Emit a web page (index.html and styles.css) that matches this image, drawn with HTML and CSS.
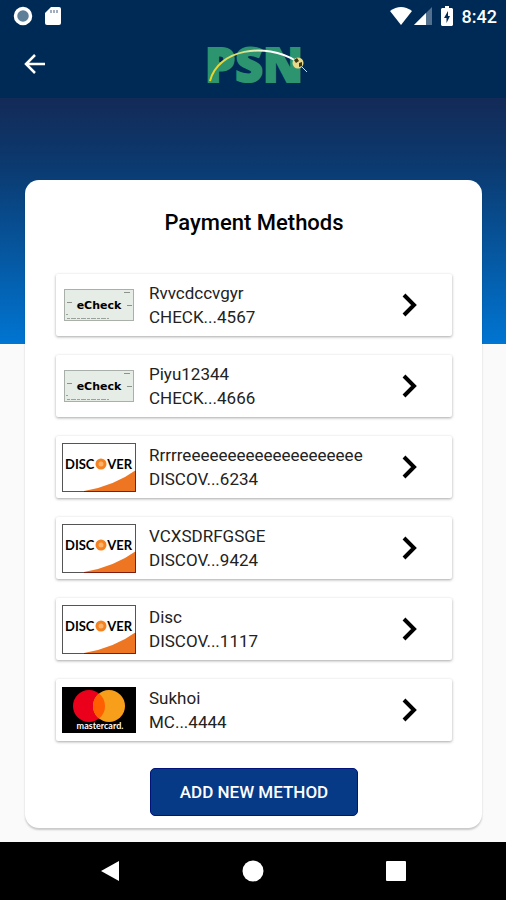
FILE: index.html
```html
<!DOCTYPE html>
<html lang="en">
<head>
    <meta charset="UTF-8">
    <meta name="viewport" content="width=device-width, initial-scale=1.0">
    <title>PSN - Payment Methods</title>
    <link rel="stylesheet" href="styles.css">
</head>
<body>
    <!-- Shared drawings -->
    <svg class="sprites" aria-hidden="true">
        <symbol id="echeck" viewBox="0 0 74 34">
            <rect x="2.500" y="1.500" width="69" height="31" fill="#e6ede6" stroke="#a9b0a9"/>
            <path d="M62 4.500h6M5 14.500h5M65 17.500h5" stroke="#8b928b"/>
            <path d="M5 30.500h42" stroke="#9ba29b" stroke-dasharray="3 1 5 1"/>
            <path d="M4 26.500h2" stroke="#9ba29b"/>
            <text x="37" y="21" text-anchor="middle" class="echeck-text">eCheck</text>
        </symbol>
        <symbol id="discover" viewBox="0 0 74 49">
            <rect width="74" height="49" fill="#fff"/>
            <path d="M22 48Q52 43 74 27V49H22z" fill="#ee7623"/>
            <rect x="0.500" y="0.500" width="73" height="48" fill="none" stroke="#555"/>
            <path d="M22 48.500H73.500V28" fill="none" stroke="#7d1c10"/>
            <text x="3" y="26" class="discover-text">DISC</text>
            <circle cx="39" cy="21" r="5.500" fill="#f58220"/>
            <circle cx="39" cy="21" r="2.500" fill="#fbb269"/>
            <text x="70" y="26" text-anchor="end" class="discover-text">VER</text>
        </symbol>
        <symbol id="mastercard" viewBox="0 0 74 46">
            <rect width="74" height="46" fill="#000"/>
            <circle cx="27" cy="19" r="16" fill="#eb001b"/>
            <circle cx="47" cy="19" r="16" fill="#f79e1b"/>
            <path d="M37 6.500a16 16 0 0 1 0 25a16 16 0 0 1 0-25z" fill="#ff5f00"/>
            <text x="38" y="42" text-anchor="middle" class="mastercard-text">mastercard.</text>
        </symbol>
        <symbol id="chevron" viewBox="0 0 16 24">
            <path d="M2 2l10 10L2 22" fill="none" stroke="#000" stroke-width="4"/>
        </symbol>
    </svg>

    <div class="status-bar">
        <div class="status-group">
            <svg width="20" height="20" viewBox="0 0 20 20">
                <circle cx="10" cy="10" r="7.500" fill="#5d7f98" stroke="#fff" stroke-width="3.500"/>
            </svg>
            <svg width="16" height="20" viewBox="0 0 16 20">
                <path d="M6 1h8a2 2 0 0 1 2 2v14a2 2 0 0 1-2 2H2a2 2 0 0 1-2-2V7z" fill="#fff"/>
                <path d="M6 4v3M9 4v3M12 4v3" stroke="#8294aa" stroke-width="1.500"/>
            </svg>
        </div>
        <div class="status-group status-right">
            <svg width="22" height="18" viewBox="0 0 22 18">
                <path d="M0 4Q11-4 22 4L11 18z" fill="#fff"/>
            </svg>
            <svg width="18" height="18" viewBox="0 0 18 18">
                <path d="M18 0v18H0z" fill="#53708e"/>
                <path d="M12 6v12H0z" fill="#fff"/>
            </svg>
            <svg width="12" height="20" viewBox="0 0 12 20" class="battery">
                <path d="M4 0h4v2h3l1 1v16l-1 1H1l-1-1V3l1-1h3z" fill="#fff"/>
                <path d="M7 5L3 12h2.500v5L9 10H7z" fill="#002a56"/>
            </svg>
            <span class="clock">8:42</span>
        </div>
    </div>

    <header class="header">
        <a href="#" class="back" aria-label="Back">
            <svg width="22" height="20" viewBox="0 0 22 20">
                <path d="M21 10H2M11 1L2 10l9 9" fill="none" stroke="#fff" stroke-width="2.500"/>
            </svg>
        </a>
        <svg class="logo" width="116" height="64" viewBox="0 0 116 64">
            <defs>
                <linearGradient id="arc" x1="0" x2="1">
                    <stop offset="0" stop-color="#f0d21c"/>
                    <stop offset="0.400" stop-color="#d8e08c"/>
                    <stop offset="0.700" stop-color="#fff"/>
                </linearGradient>
            </defs>
            <text x="59" y="50" text-anchor="middle" class="logo-text">PSN</text>
            <path d="M15 49C23 17 70 10 101 29" fill="none" stroke="url(#arc)" stroke-width="2"/>
            <circle cx="103" cy="31" r="5.500" fill="#e8d98a"/>
            <path d="M99 28l3-2 2 3-3 2zM104 31l3-1v4l-3 1z" fill="#3b3518"/>
            <path d="M107 35l5 5" stroke="#d5dfc5"/>
        </svg>
    </header>

    <main class="container">
        <section class="card">
            <h1>Payment Methods</h1>
            <div class="methods">
                <a href="#" class="method">
                    <svg width="74" height="34"><use href="#echeck"/></svg>
                    <span class="method-info"><span>Rvvcdccvgyr</span><span>CHECK...4567</span></span>
                    <svg width="16" height="24"><use href="#chevron"/></svg>
                </a>
                <a href="#" class="method">
                    <svg width="74" height="34"><use href="#echeck"/></svg>
                    <span class="method-info"><span>Piyu12344</span><span>CHECK...4666</span></span>
                    <svg width="16" height="24"><use href="#chevron"/></svg>
                </a>
                <a href="#" class="method">
                    <svg width="74" height="49"><use href="#discover"/></svg>
                    <span class="method-info"><span>Rrrrreeeeeeeeeeeeeeeeeeee</span><span>DISCOV...6234</span></span>
                    <svg width="16" height="24"><use href="#chevron"/></svg>
                </a>
                <a href="#" class="method">
                    <svg width="74" height="49"><use href="#discover"/></svg>
                    <span class="method-info"><span>VCXSDRFGSGE</span><span>DISCOV...9424</span></span>
                    <svg width="16" height="24"><use href="#chevron"/></svg>
                </a>
                <a href="#" class="method">
                    <svg width="74" height="49"><use href="#discover"/></svg>
                    <span class="method-info"><span>Disc</span><span>DISCOV...1117</span></span>
                    <svg width="16" height="24"><use href="#chevron"/></svg>
                </a>
                <a href="#" class="method">
                    <svg width="74" height="46"><use href="#mastercard"/></svg>
                    <span class="method-info"><span>Sukhoi</span><span>MC...4444</span></span>
                    <svg width="16" height="24"><use href="#chevron"/></svg>
                </a>
            </div>
            <button type="button" class="add-button">ADD NEW METHOD</button>
        </section>
    </main>

    <nav class="nav">
        <button type="button" aria-label="Back">
            <svg width="22" height="22" viewBox="0 0 22 22"><path d="M20 1v20L2 11z" fill="#fff"/></svg>
        </button>
        <button type="button" aria-label="Home">
            <svg width="22" height="22" viewBox="0 0 22 22"><circle cx="11" cy="11" r="10.500" fill="#fff"/></svg>
        </button>
        <button type="button" aria-label="Overview">
            <svg width="22" height="22" viewBox="0 0 22 22"><rect x="1" y="1" width="20" height="20" rx="1" fill="#fff"/></svg>
        </button>
    </nav>
</body>
</html>
```
FILE: styles.css
```css
* {
    box-sizing: border-box;
}
body {
    margin: 0;
    font-family: Roboto, sans-serif;
    background-color: #fafafa;
    color: black;
    display: flex;
    flex-direction: column;
    min-height: 100vh;
}
svg {
    display: block;
    flex: none;
}
.sprites {
    display: none;
}
.status-bar {
    display: flex;
    justify-content: space-between;
    align-items: center;
    height: 32px;
    padding: 0 9px 0 13px;
    background-color: #002a56;
}
.status-group {
    display: flex;
    align-items: center;
    gap: 12px;
}
.status-right {
    gap: 2px;
}
.battery {
    margin: 0 7px;
}
.clock {
    color: white;
    font-size: 18px;
    font-weight: 500;
}
.header {
    display: grid;
    grid-template-columns: 1fr auto 1fr;
    align-items: center;
    height: 66px;
    padding: 0 24px 2px;
    background-color: #002a56;
}
.back {
    justify-self: start;
}
.logo {
    grid-column: 2;
}
.logo-text {
    font-family: "Open Sans", sans-serif;
    font-size: 48px;
    font-weight: 800;
    fill: #2c9570;
    stroke: #2c9570;
    stroke-width: 2px;
}
.container {
    flex: 1;
    padding: 82px 24px 14px 25px;
    background: linear-gradient(#132a57, #0b3a70 28%, #0075d2) no-repeat;
    background-size: 100% 246px;
}
.card {
    display: flex;
    flex-direction: column;
    align-items: center;
    padding: 28px 30px 12px 31px;
    border-radius: 14px;
    background-color: white;
    box-shadow: 0 2px 2px rgba(0, 0, 0, 0.2);
}
.card h1 {
    margin: 0 0 36px;
    font-size: 22px;
    line-height: 30px;
    font-weight: 500;
}
.methods {
    display: flex;
    flex-direction: column;
    gap: 19px;
    width: 100%;
}
.method {
    display: flex;
    align-items: center;
    gap: 13px;
    height: 62px;
    padding: 0 34px 0 6px;
    border-radius: 2px;
    color: #222;
    text-decoration: none;
    box-shadow: 0 1px 3px rgba(0, 0, 0, 0.35);
}
.method-info {
    flex: 1;
    display: flex;
    flex-direction: column;
    font-size: 17px;
    line-height: 24px;
}
.echeck-text {
    font-family: "DejaVu Sans", sans-serif;
    font-size: 11px;
    font-weight: 700;
}
.discover-text {
    font-family: Lato, sans-serif;
    font-size: 13px;
    font-weight: 700;
}
.mastercard-text {
    font-family: Lato, sans-serif;
    font-size: 9px;
    font-weight: 700;
    fill: white;
}
.add-button {
    height: 48px;
    margin-top: 27px;
    padding: 0 29px;
    border: 1px solid #00137a;
    border-radius: 5px;
    background-color: #063a87;
    color: white;
    font-family: inherit;
    font-size: 17px;
    font-weight: 500;
}
.nav {
    display: flex;
    justify-content: center;
    align-items: center;
    gap: 24%;
    height: 58px;
    background-color: black;
}
.nav button {
    padding: 0;
    border: 0;
    background: none;
}
```
